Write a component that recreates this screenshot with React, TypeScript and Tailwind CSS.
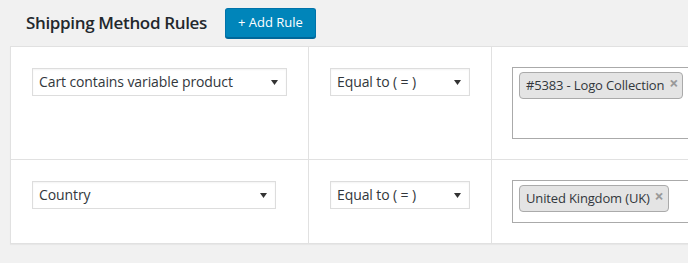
import React from "react";

function Arrow() {
  return (
    <svg width="7" height="5" viewBox="0 0 7 5" className="shrink-0">
      <path d="M0 0 L7 0 L3.5 5 Z" fill="#333" />
    </svg>
  );
}

function Select({ label, width }: { label: string; width: string }) {
  return (
    <div
      className={`${width} h-[28px] border border-[#ddd] bg-white flex items-center justify-between pl-[6px] pr-[8px] shadow-[inset_0_1px_2px_rgba(0,0,0,0.05)]`}
    >
      <span className="text-[14px] text-[#32373c] leading-none tracking-[-0.1px]">{label}</span>
      <Arrow />
    </div>
  );
}

function Token({ label }: { label: string }) {
  return (
    <div className="relative h-[27px] mt-[4px] ml-[6px] bg-[#e4e4e4] border border-[#aaa] rounded-[4px] pl-[6px] pr-[18px] flex items-center">
      <span className="text-[13px] text-[#32373c] leading-none tracking-[-0.15px]">{label}</span>
      <span className="absolute right-[4px] top-[2px] text-[16px] font-bold leading-none text-[#999]">×</span>
    </div>
  );
}

export default function App() {
  return (
    <div
      className="w-[688px] h-[263px] overflow-hidden bg-[#f1f1f1]"
      style={{ fontFamily: '"Open Sans", "Noto Sans", sans-serif' }}
    >
      <div className="flex items-center h-[46px] pl-[26px] pb-[1px] gap-[18px]">
        <h2 className="text-[17px] font-semibold text-[#23282d] tracking-[-0.35px]">Shipping Method Rules</h2>
        <button className="h-[30px] px-[12px] bg-[#0085ba] border border-[#0073aa] border-b-[#006799] rounded-[3px] text-white text-[13px] leading-none shadow-[0_1px_0_#006799]">
          + Add Rule
        </button>
      </div>
      <div className="ml-[10px] w-[720px] bg-white border border-[#e1e1e1] shadow-[0_1px_1px_rgba(0,0,0,0.04)]">
        <div className="grid grid-cols-[298px_183px_1fr] border-b border-[#e1e1e1]">
          <div className="border-r border-[#e1e1e1] pt-[21px] pl-[21px] h-[112px]">
            <Select label="Cart contains variable product" width="w-[255px]" />
          </div>
          <div className="border-r border-[#e1e1e1] pt-[21px] pl-[21px]">
            <Select label="Equal to ( = )" width="w-[140px]" />
          </div>
          <div className="pt-[20px] pl-[20px]">
            <div className="h-[72px] w-[220px] border border-[#aaa] bg-white flex items-start">
              <Token label="#5383 - Logo Collection" />
            </div>
          </div>
        </div>
        <div className="grid grid-cols-[298px_183px_1fr]">
          <div className="border-r border-[#e1e1e1] pt-[21px] pl-[21px] h-[83px]">
            <Select label="Country" width="w-[244px]" />
          </div>
          <div className="border-r border-[#e1e1e1] pt-[21px] pl-[21px]">
            <Select label="Equal to ( = )" width="w-[140px]" />
          </div>
          <div className="pt-[20px] pl-[20px]">
            <div className="h-[43px] w-[220px] border border-[#aaa] bg-white flex items-start">
              <Token label="United Kingdom (UK)" />
            </div>
          </div>
        </div>
      </div>
    </div>
  );
}
